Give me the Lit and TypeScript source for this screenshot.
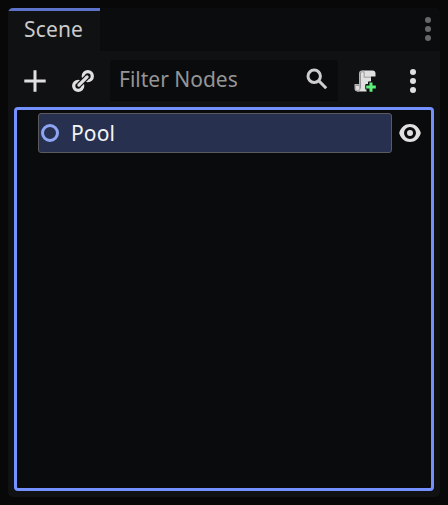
import { LitElement, html, css } from "lit";
import { customElement } from "lit/decorators.js";

@customElement("app-root")
class AppRoot extends LitElement {
  static styles = css`
    :host { display: block; box-sizing: border-box; width: 448px; height: 505px; padding: 8px; background: #080808; font-family: "Noto Sans", sans-serif; font-size: 21px; color: #cbcbcb; }
    * { box-sizing: border-box; }
    svg { display: block; flex: none; }
    .dock { height: 489px; display: flex; flex-direction: column; border-radius: 5px; background: #101113; overflow: hidden; }
    .tabs { height: 43px; flex: none; display: flex; justify-content: space-between; background: #0b0c0e; }
    .tab { width: 92px; border-top: 3px solid #5c73c9; background: #101113; padding: 3px 0 0 16px; line-height: 30px; letter-spacing: 0.15px; }
    .more { margin: 8px 0 0; }
    .tools { height: 56px; flex: none; display: flex; align-items: center; padding: 3px 15px 0; }
    .link { margin-left: 24px; }
    .filter { width: 228px; height: 41px; margin: 0 15px; padding: 0 9px 2px; display: flex; align-items: center; justify-content: space-between; background: #0a0b0d; border-radius: 3px 3px 0 0; color: #959595; border-bottom: 1px solid #08090a; }
    .menu { margin-left: 24px; }
    .tree { margin: 0 6px 6px; flex: 1; border: 3px solid #7590ff; border-radius: 4px; background: #0a0b0d; padding: 3px 9px 0 21px; }
    .row { display: flex; align-items: center; }
    .node { width: 354px; height: 40px; display: flex; align-items: center; border: 1px solid #5b5b5f; border-radius: 3px; background: #27304f; color: #f4f4f5; }
    .name { margin-left: 8px; line-height: 38px; letter-spacing: 0.15px; }
    .eye { margin-left: 6px; }
  `;

  dots(color: string) {
    return html`<svg width="24" height="26" viewBox="0 0 24 26" fill=${color}><circle cx="12" cy="4" r="3"/><circle cx="12" cy="13" r="3"/><circle cx="12" cy="22" r="3"/></svg>`;
  }

  render() {
    return html`<div class="dock">
      <div class="tabs"><div class="tab">Scene</div><div class="more">${this.dots("#686868")}</div></div>
      <div class="tools">
        <svg width="24" height="24" viewBox="0 0 24 24"><path d="M12 1.3v21.4M1.3 12h21.4" stroke="#e0e0e0" stroke-width="3"/></svg>
        <svg class="link" width="24" height="24" viewBox="0 0 24 24" fill="none" stroke="#e0e0e0" stroke-width="3.300">
          <circle cx="16.800" cy="7.200" r="4.500"/><circle cx="7.200" cy="16.800" r="4.500"/>
          <path d="m8.200 15.800 7.600-7.600" stroke="#101113" stroke-width="5.500"/>
          <path d="m7.900 16.100 8.200-8.200" stroke-width="3.200" stroke-linecap="round"/>
        </svg>
        <div class="filter"><span>Filter Nodes</span>
          <svg width="24" height="24" viewBox="0 0 24 24" fill="none" stroke="#cdcdcd" stroke-width="3"><circle cx="9.2" cy="9.2" r="6.2"/><path d="m13.4 13.4 7.8 7.8"/></svg>
        </div>
        <svg width="24" height="24" viewBox="0 0 16 16">
          <path fill="#e0e0e0" d="M6 1v1a1 1 0 0 0-1 1v10H4v-2H2v3l1 1h6v-2h-.5v-3H10V8.500h2V5h3V3a2 2 0 0 0-2-2z"/>
          <path fill="#b2b2b2" d="M6 1a2 2 0 0 0-2 2v7H1v3a2 2 0 0 0 2 2 2 2 0 0 0 2-2V3a1 1 0 0 1 2 0v3h5V5H8V3a2 2 0 0 0-2-2zM2 11h2v2a1 1 0 0 1-2 0z"/>
          <path fill="#5ff07b" stroke="#101113" stroke-width="1.200" paint-order="stroke" d="M11 9h2v2h2.200v2H13v2.200h-2V13H8.800v-2H11z"/>
        </svg>
        <div class="menu">${this.dots("#e0e0e0")}</div>
      </div>
      <div class="tree"><div class="row">
        <div class="node">
          <svg width="24" height="24" viewBox="0 0 24 24"><circle cx="11" cy="12" r="7.500" fill="none" stroke="#8da5f3" stroke-width="3"/></svg>
          <span class="name">Pool</span>
        </div>
        <svg class="eye" width="24" height="24" viewBox="0 0 16 16"><path fill="#e0e0e0" fill-rule="evenodd" d="M8 2C4.600 2 2 4.300.900 7.500v1C2 11.700 4.600 14 8 14s6-2.300 7.100-5.500v-1C14 4.300 11.400 2 8 2zm0 2a4 4 0 0 1 0 8 4 4 0 0 1 0-8zm0 2a2 2 0 0 0 0 4 2 2 0 0 0 0-4z"/></svg>
      </div></div>
    </div>`;
  }
}
